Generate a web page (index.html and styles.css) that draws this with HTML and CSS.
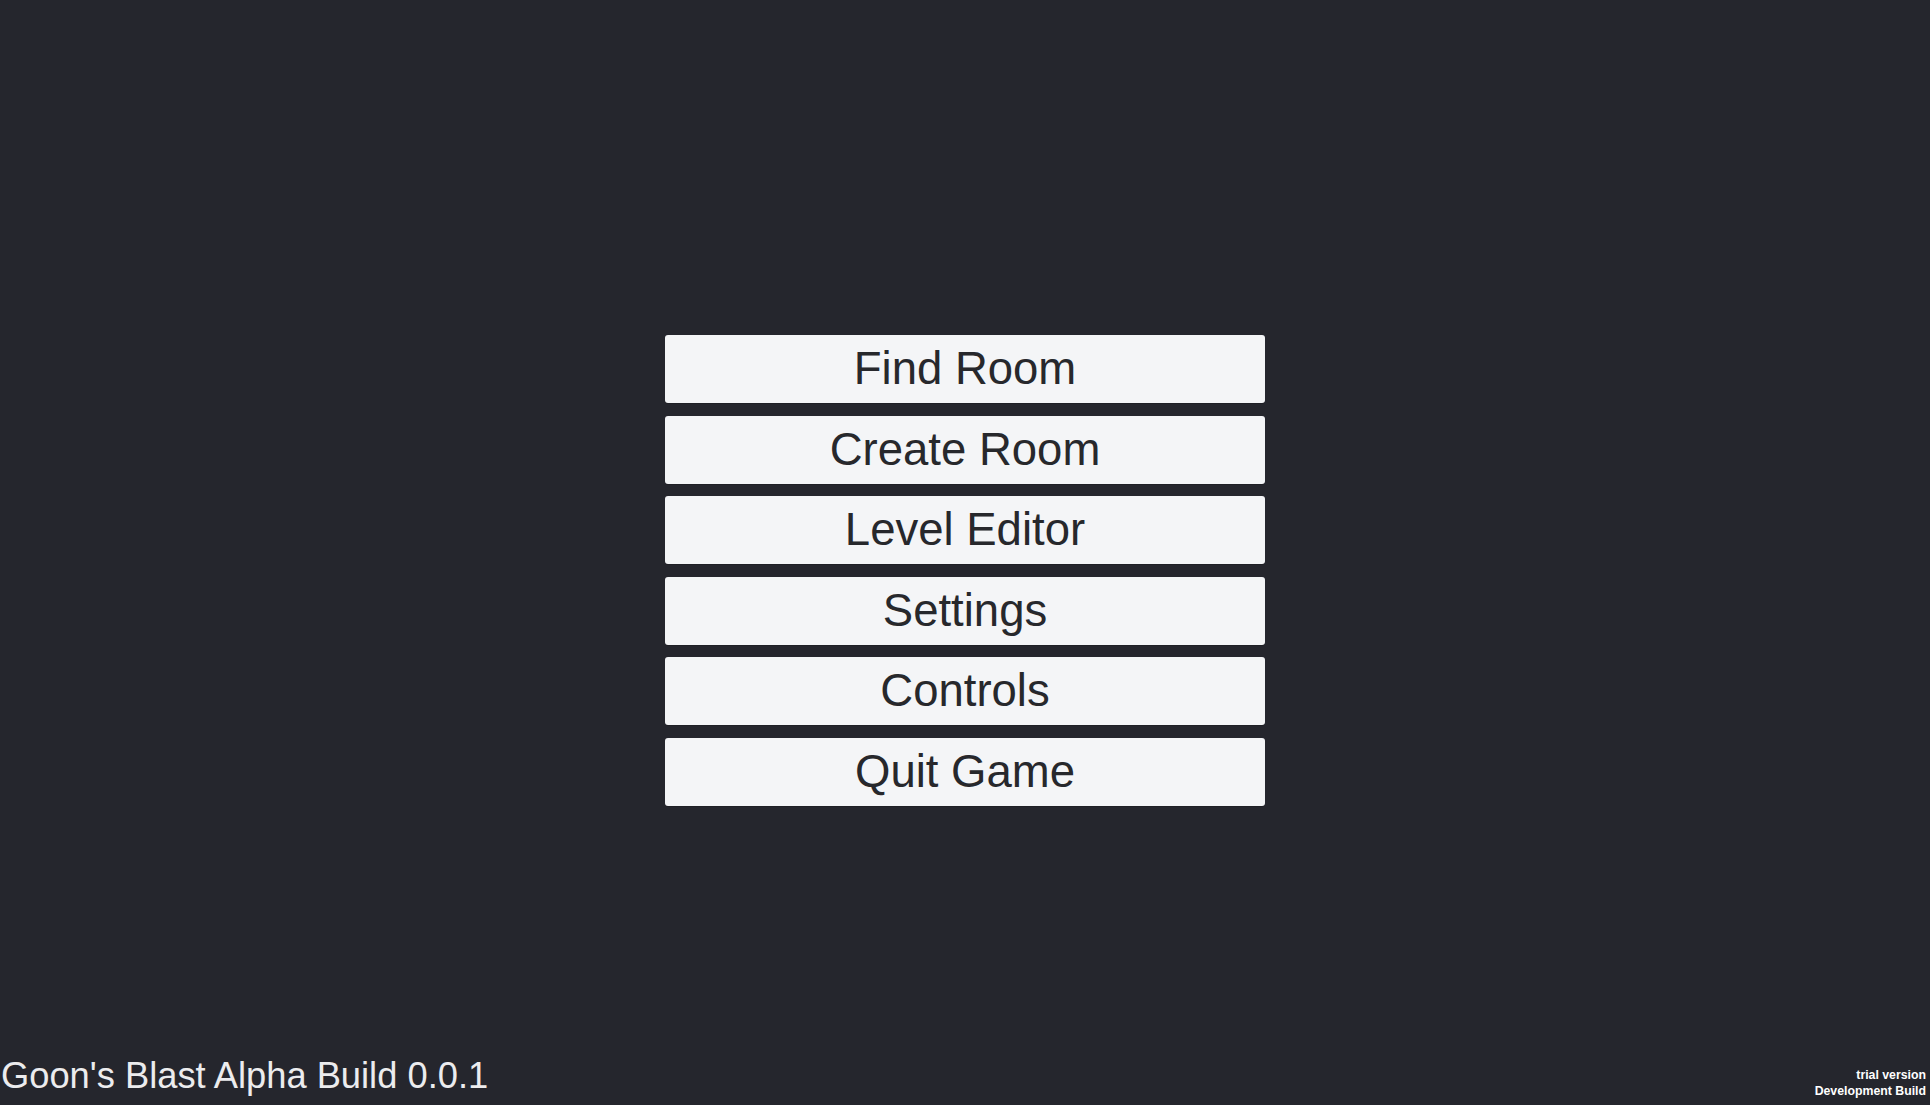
FILE: index.html
```html
<!DOCTYPE html>
<html lang="en">
<head>
<meta charset="utf-8">
<title>Goon's Blast</title>
<link rel="stylesheet" href="styles.css">
</head>
<body>
<main class="stage">
  <nav class="menu">
    <button class="menu-btn">Find Room</button>
    <button class="menu-btn">Create Room</button>
    <button class="menu-btn">Level Editor</button>
    <button class="menu-btn">Settings</button>
    <button class="menu-btn">Controls</button>
    <button class="menu-btn">Quit Game</button>
  </nav>
</main>
<footer class="footer">
  <div class="build">Goon's Blast Alpha Build 0.0.1</div>
  <div class="watermark">
    <div>trial version</div>
    <div>Development Build</div>
  </div>
</footer>
</body>
</html>
```

FILE: styles.css
```css
html, body {
  margin: 0;
  padding: 0;
}
body {
  width: 1930px;
  height: 1105px;
  background: #25262d;
  display: flex;
  flex-direction: column;
  overflow: hidden;
  font-family: "Liberation Sans", Arial, sans-serif;
}
.stage {
  flex: 1;
  display: flex;
  justify-content: center;
  padding-top: 335px;
}
.menu {
  width: 600px;
  display: flex;
  flex-direction: column;
  gap: 12.5px;
}
.menu-btn {
  height: 68px;
  margin: 0;
  padding: 0;
  border: none;
  border-radius: 3px;
  background: #f4f5f7;
  color: #27282c;
  font-family: "Liberation Sans", Arial, sans-serif;
  font-size: 45.5px;
  line-height: 68px;
  text-align: center;
  box-shadow: 0 1px 0 rgba(0,0,0,0.15);
}
.footer {
  display: flex;
  justify-content: space-between;
  align-items: flex-end;
}
.build {
  color: #ececee;
  font-size: 36.3px;
  line-height: 41px;
  padding-left: 1px;
  padding-bottom: 9px;
}
.watermark {
  color: #ffffff;
  font-weight: bold;
  font-size: 12.3px;
  line-height: 16px;
  text-align: right;
  padding-right: 4px;
  padding-bottom: 6.5px;
}
```
